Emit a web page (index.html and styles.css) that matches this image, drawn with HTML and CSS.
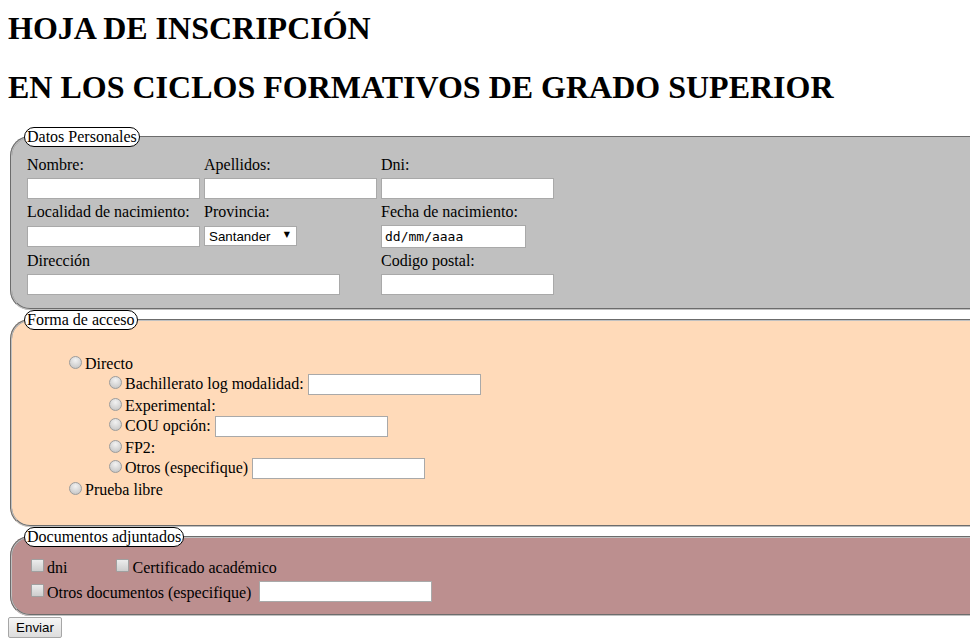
FILE: index.html
```html
<!DOCTYPE html>
<html lang="es">
<head>
<meta charset="utf-8">
<title>Hoja de inscripción</title>
<link rel="stylesheet" href="styles.css">
</head>
<body>
<h1 class="title title-first">HOJA DE INSCRIPCIÓN</h1>
<h1 class="title title-second">EN LOS CICLOS FORMATIVOS DE GRADO SUPERIOR</h1>
<form class="form">
  <fieldset class="group group-personal">
    <legend class="group-legend">Datos Personales</legend>
    <div class="personal-grid">
      <span class="cell">Nombre:</span>
      <span class="cell">Apellidos:</span>
      <span class="cell">Dni:</span>
      <span class="cell"><input class="field" type="text"></span>
      <span class="cell"><input class="field" type="text"></span>
      <span class="cell"><input class="field" type="text"></span>
      <span class="cell">Localidad de nacimiento:</span>
      <span class="cell">Provincia:</span>
      <span class="cell">Fecha de nacimiento:</span>
      <span class="cell"><input class="field" type="text"></span>
      <span class="cell"><span class="select-wrap"><select class="select"><option>Santander</option></select></span></span>
      <span class="cell"><input class="field field-date" type="text" value="dd/mm/aaaa" readonly></span>
      <span class="cell cell-wide">Dirección</span>
      <span class="cell">Codigo postal:</span>
      <span class="cell cell-wide"><input class="field field-long" type="text"></span>
      <span class="cell"><input class="field" type="text"></span>
    </div>
  </fieldset>

  <fieldset class="group group-access">
    <legend class="group-legend">Forma de acceso</legend>
    <ul class="access">
      <li><input class="radio" type="radio" name="acceso">Directo
        <ul class="access access-sub">
          <li><input class="radio" type="radio" name="directo">Bachillerato log modalidad: <input class="field" type="text"></li>
          <li><input class="radio" type="radio" name="directo">Experimental:</li>
          <li><input class="radio" type="radio" name="directo">COU opción: <input class="field" type="text"></li>
          <li><input class="radio" type="radio" name="directo">FP2:</li>
          <li><input class="radio" type="radio" name="directo">Otros (especifique) <input class="field" type="text"></li>
        </ul>
      </li>
      <li><input class="radio" type="radio" name="acceso">Prueba libre</li>
    </ul>
  </fieldset>

  <fieldset class="group group-docs">
    <legend class="group-legend">Documentos adjuntados</legend>
    <div class="docs">
      <div class="docs-row"><span class="doc"><input class="check" type="checkbox">dni</span><span class="doc doc-second"><input class="check" type="checkbox">Certificado académico</span></div>
      <div class="docs-row"><span class="doc"><input class="check" type="checkbox">Otros documentos (especifique)</span><input class="field field-docs" type="text"></div>
    </div>
  </fieldset>
  <button class="submit" type="button">Enviar</button>
</form>
</body>
</html>
```

FILE: styles.css
```css
body {
  margin: 8px 0 8px 8px;
  font-family: "Liberation Serif", "Times New Roman", serif;
  font-size: 16px;
  color: #000;
  background: #fff;
}
.title {
  font-size: 32px;
  font-weight: bold;
  margin: 0;
  white-space: nowrap;
}
.title-first {
  margin-top: 2px;
}
.title-second {
  margin-top: 22px;
  margin-bottom: 21px;
}
.form {
  margin: 0;
}
.group {
  min-width: 0;
  margin: 0 0 0 2px;
  padding: 5.6px 12px 10px;
  border: 2px groove #c0c0c0;
  border-right: none;
  border-radius: 20px 0 0 20px;
}
.group-personal { background: #c0c0c0; }
.group-access { background: #ffdab9; }
.group-docs { background: #bc8f8f; padding-bottom: 9px; }
.group-legend {
  background: #fff;
  border: 1px solid #000;
  border-radius: 10px;
  padding: 0 2px;
  line-height: normal;
}
.personal-grid {
  display: grid;
  grid-template-columns: repeat(3, 175px);
  gap: 2px;
  padding: 2px;
  align-items: center;
}
.cell {
  padding: 1px;
  display: block;
}
.cell-wide {
  grid-column: span 2;
}
.field {
  box-sizing: border-box;
  width: 173px;
  height: 21px;
  margin: 0;
  padding: 1px 2px;
  border: 1px solid #a9a9a9;
  background: #fff;
  font-family: "Liberation Sans", Arial, sans-serif;
  font-size: 13.33px;
  vertical-align: baseline;
  display: inline-block;
}
.personal-grid .field {
  display: block;
}
.field-long {
  width: 313px;
}
.field-date {
  width: 145px;
  height: 23px;
  padding-left: 3px;
  font-family: "DejaVu Sans Mono", monospace;
  font-size: 13px;
  color: #000;
}
.select-wrap {
  position: relative;
  display: block;
  width: 93px;
  height: 20px;
}
.select {
  appearance: none;
  -webkit-appearance: none;
  box-sizing: border-box;
  width: 93px;
  height: 20px;
  margin: 0;
  padding: 0 0 0 4px;
  border: 1px solid #a9a9a9;
  border-radius: 0;
  background: #fff;
  font-family: "Liberation Sans", Arial, sans-serif;
  font-size: 13.33px;
  color: #000;
  display: block;
}
.select-wrap::after {
  content: "▼";
  position: absolute;
  right: 7px;
  top: 4px;
  font-family: "DejaVu Sans", sans-serif;
  font-size: 8px;
  line-height: 10px;
  color: #000;
  pointer-events: none;
}
.access {
  list-style: none;
  margin: 18px 0 16px;
  padding-left: 40px;
}
.access-sub {
  margin: 0;
}
.radio {
  appearance: none;
  -webkit-appearance: none;
  box-sizing: border-box;
  width: 13px;
  height: 13px;
  margin: 3px 3px 0 5px;
  border: 1px solid #9c9c9c;
  border-radius: 50%;
  background: radial-gradient(circle at 50% 30%, #f2f2f2 0%, #d6d6d6 55%, #bdbdbd 100%);
}
.docs {
  padding: 2px;
}
.docs-row {
  padding: 1px;
  display: flex;
  align-items: center;
  min-height: 20px;
}
.docs-row + .docs-row {
  margin-top: 2px;
}
.doc-second {
  margin-left: 45px;
}
.check {
  appearance: none;
  -webkit-appearance: none;
  box-sizing: border-box;
  width: 13px;
  height: 13px;
  margin: 3px 3px 3px 4px;
  border: 1px solid #a0a0a0;
  border-radius: 1px;
  background: linear-gradient(#ececec, #cdcdcd);
  vertical-align: -2px;
}
.field-docs {
  margin-left: 8px;
}
.submit {
  box-sizing: border-box;
  height: 21px;
  width: 54px;
  margin: 1px 0 0;
  padding: 0 6px;
  border: 1px solid #a6a6a6;
  border-radius: 2px;
  background: linear-gradient(#f6f6f6, #dddddd);
  font-family: "Liberation Sans", Arial, sans-serif;
  font-size: 13.33px;
  color: #000;
}
```
